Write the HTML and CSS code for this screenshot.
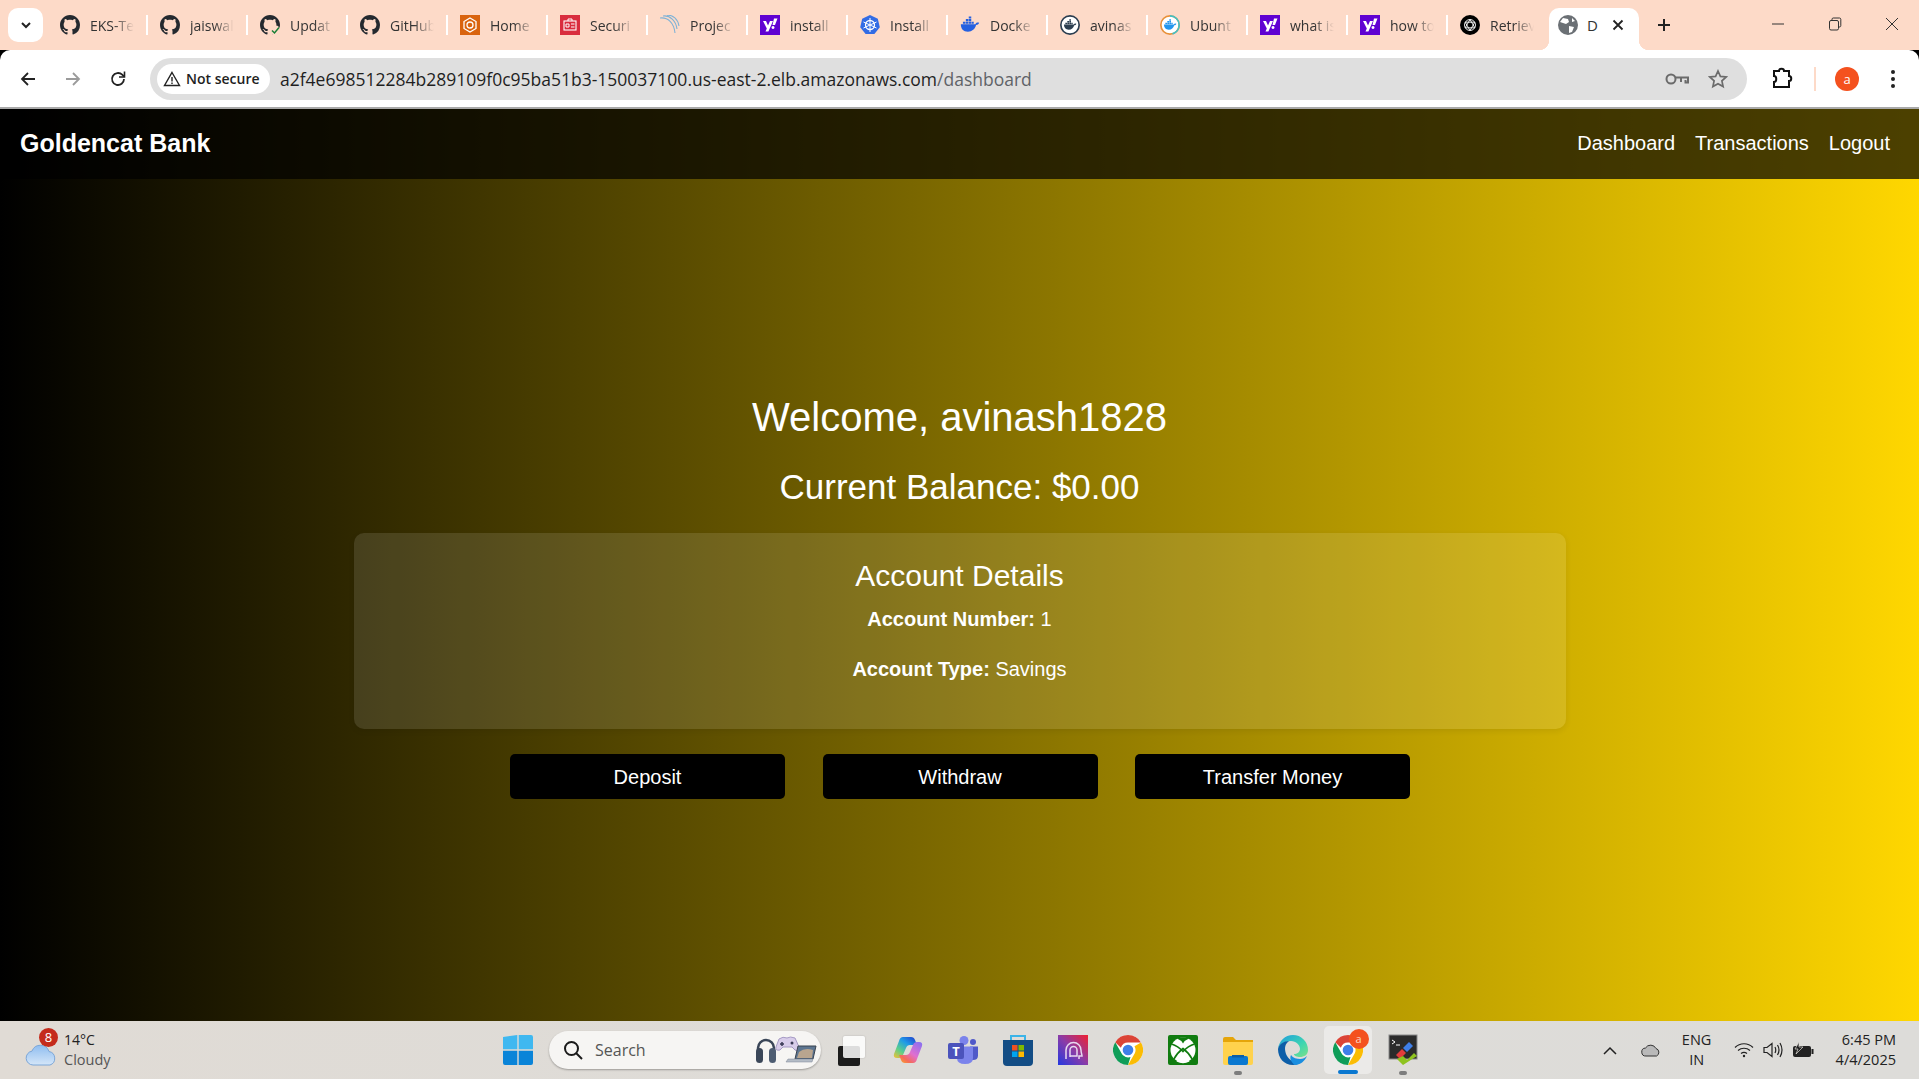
FILE: index.html
```html
<!DOCTYPE html>
<html lang="en">
<head>
  <meta charset="UTF-8" />
  <meta name="viewport" content="width=device-width, initial-scale=1.0" />
  <title>Dashboard - Goldencat Bank</title>
  <link rel="stylesheet" href="styles.css">
</head>
<body>
  <svg class="sprite" aria-hidden="true">
    <symbol id="i-github" viewBox="0 0 16 16">
      <path fill="#24292f" d="M8 0C3.58 0 0 3.58 0 8c0 3.54 2.29 6.53 5.47 7.59.4.07.55-.17.55-.38 0-.19-.01-.82-.01-1.49-2.01.37-2.53-.49-2.69-.94-.09-.23-.48-.94-.82-1.13-.28-.15-.68-.52-.01-.53.63-.01 1.08.58 1.23.82.72 1.21 1.87.87 2.33.66.07-.52.28-.87.51-1.07-1.78-.2-3.64-.89-3.64-3.95 0-.87.31-1.59.82-2.15-.08-.2-.36-1.02.08-2.12 0 0 .67-.21 2.2.82.64-.18 1.32-.27 2-.27.68 0 1.36.09 2 .27 1.53-1.04 2.2-.82 2.2-.82.44 1.1.16 1.92.08 2.12.51.56.82 1.27.82 2.15 0 3.07-1.87 3.75-3.65 3.95.29.25.54.73.54 1.48 0 1.07-.01 1.93-.01 2.2 0 .21.15.46.55.38A8.013 8.013 0 0016 8c0-4.42-3.58-8-8-8z"/>
    </symbol>
    <symbol id="i-yahoo" viewBox="0 0 20 20">
      <rect width="20" height="20" fill="#6001d2"/>
      <path fill="#fff" d="M3 6h3l2 4.600L10 6h3l-4.600 10.500H5.500l1.300-3z"/>
      <path fill="#fff" d="M14 3.500h3.500L15 10h-2.500zM13 11a1.500 1.500 0 1 0 .01 0z"/>
    </symbol>
    <symbol id="i-chrome" viewBox="0 0 48 48">
      <circle cx="24" cy="24" r="24" fill="#fff"/>
      <path fill="#db4437" d="M24 0a24 24 0 0 1 20.800 12H24a12 12 0 0 0-11.400 8.200L3.600 11.500A24 24 0 0 1 24 0z"/>
      <path fill="#fbbc04" d="M44.800 12A24 24 0 0 1 24 48l10.400-18A12 12 0 0 0 34.400 18z"/>
      <path fill="#0f9d58" d="M3.600 11.500l10 17.500A12 12 0 0 0 28 35.300L24 48A24 24 0 0 1 3.600 11.500z"/>
      <circle cx="24" cy="24" r="11" fill="#fff"/>
      <circle cx="24" cy="24" r="8.500" fill="#3f7fe8"/>
    </symbol>
    <symbol id="i-docker" viewBox="0 0 24 24">
      <path d="M1 11h17.500c.6-1.800 2.300-2.300 4.500-1.600-.7 1.900-2 2.700-3.700 2.700C18 17 14.500 20 9.500 20 4 20 1 16.500 1 11z"/>
      <path d="M3.500 8h3v2.500h-3zM7 8h3v2.500H7zM10.500 8h3v2.500h-3zM7 4.800h3v2.700H7zM10.500 4.800h3v2.700h-3zM10.500 1.800h3v2.500h-3zM14 8h2.500v2.500H14z"/>
    </symbol>
  </svg>

  <div class="tabstrip">
    <div class="tab-menu">
      <svg width="14" height="14" viewBox="0 0 14 14"><path d="M3 5l4 4 4-4" fill="none" stroke="#222" stroke-width="2"/></svg>
    </div>
    <div class="tab"><svg class="favicon"><use href="#i-github"/></svg><span class="tab-title">EKS-Te</span></div>
    <div class="tab"><svg class="favicon"><use href="#i-github"/></svg><span class="tab-title">jaiswal</span></div>
    <div class="tab">
      <svg class="favicon" viewBox="0 0 20 20">
        <use href="#i-github" width="20" height="20"/>
        <circle cx="15.500" cy="15.500" r="5" fill="#fddac8"/>
        <path d="M12 15.500l2.500 2.500 4.500-5.500" fill="none" stroke="#1a7f37" stroke-width="1.500"/>
      </svg>
      <span class="tab-title">Updat</span>
    </div>
    <div class="tab"><svg class="favicon"><use href="#i-github"/></svg><span class="tab-title">GitHub</span></div>
    <div class="tab">
      <svg class="favicon" viewBox="0 0 20 20">
        <rect width="20" height="20" fill="#d9640f"/>
        <path d="M10 3l6 3.500v7L10 17l-6-3.500v-7z" fill="none" stroke="#fff" stroke-width="1.300"/>
        <circle cx="10" cy="10" r="3" fill="none" stroke="#fff" stroke-width="1.300"/>
      </svg>
      <span class="tab-title">Home</span>
    </div>
    <div class="tab">
      <svg class="favicon" viewBox="0 0 20 20">
        <rect width="20" height="20" fill="#d92d3e"/>
        <rect x="4" y="6" width="12" height="9" fill="none" stroke="#fff" stroke-width="1.100"/>
        <path d="M6 9h3v3H6zM11 9h3.500M11 12h3.500" fill="none" stroke="#fff"/>
        <path d="M8 6V4h4v2" fill="none" stroke="#fff"/>
      </svg>
      <span class="tab-title">Securi</span>
    </div>
    <div class="tab">
      <svg class="favicon" viewBox="0 0 20 20" fill="none" stroke="#7fb2d6" stroke-width="1.100">
        <path d="M0 3c8-1 14 5 15 15M3 1c7-1 13 5 14 13M7 0c6 0 11 4 12 11"/>
      </svg>
      <span class="tab-title">Projec</span>
    </div>
    <div class="tab"><svg class="favicon"><use href="#i-yahoo"/></svg><span class="tab-title">install</span></div>
    <div class="tab">
      <svg class="favicon" viewBox="0 0 20 20">
        <path d="M10 0l7.800 3.700 2 8.500-5.400 6.800H5.600L.2 12.200l2-8.500z" fill="#326ce5"/>
        <circle cx="10" cy="10" r="4.500" fill="none" stroke="#fff" stroke-width="1.300"/>
        <path d="M10 3v14M3.500 7l13 6M16.500 7l-13 6" stroke="#fff"/>
      </svg>
      <span class="tab-title">Install</span>
    </div>
    <div class="tab"><svg class="favicon docker-blue"><use href="#i-docker"/></svg><span class="tab-title">Docke</span></div>
    <div class="tab">
      <svg class="favicon" viewBox="0 0 24 24">
        <circle cx="12" cy="12" r="11" fill="#fff" stroke="#2c3e50" stroke-width="2"/>
        <g transform="translate(4 4) scale(.68)" fill="#2c3e50"><use href="#i-docker" width="24" height="24"/></g>
      </svg>
      <span class="tab-title">avinas</span>
    </div>
    <div class="tab">
      <svg class="favicon" viewBox="0 0 24 24">
        <circle cx="12" cy="12" r="11" fill="#fff" stroke="#e8913a" stroke-width="2"/>
        <path d="M12 1a11 11 0 0 1 11 11 11 11 0 0 1-8 10.600" fill="none" stroke="#3fc1c9" stroke-width="2"/>
        <g transform="translate(4 4) scale(.68)" fill="#2496ed"><use href="#i-docker" width="24" height="24"/></g>
      </svg>
      <span class="tab-title">Ubunt</span>
    </div>
    <div class="tab"><svg class="favicon"><use href="#i-yahoo"/></svg><span class="tab-title">what is</span></div>
    <div class="tab"><svg class="favicon"><use href="#i-yahoo"/></svg><span class="tab-title">how to</span></div>
    <div class="tab tab-last">
      <svg class="favicon" viewBox="0 0 20 20">
        <circle cx="10" cy="10" r="10" fill="#000"/>
        <g fill="none" stroke="#fff" stroke-width=".9">
          <circle cx="10" cy="10" r="5.500"/>
          <path d="M10 4.500l4.800 8.300H5.200zM5.200 7.200h9.600L10 15.500z"/>
        </g>
      </svg>
      <span class="tab-title">Retriev</span>
    </div>
    <div class="tab-active">
      <svg class="favicon" viewBox="0 0 20 20">
        <circle cx="10" cy="10" r="10" fill="#6b7075"/>
        <path d="M5 3l5 1 1 3-3 2-3-1-3-1zM11 11l5 1-2 5-3 1zM14 3l3 3-3 1z" fill="#fff"/>
      </svg>
      <span class="tab-active-title">D</span>
      <svg class="tab-close" width="12" height="12" viewBox="0 0 12 12"><path d="M1.500 1.500l9 9m0-9l-9 9" stroke="#222" stroke-width="1.800"/></svg>
    </div>
    <svg class="new-tab" width="14" height="14" viewBox="0 0 14 14"><path d="M7 1v12M1 7h12" stroke="#222" stroke-width="2"/></svg>
    <div class="win-controls">
      <svg width="14" height="14" viewBox="0 0 14 14"><path d="M1 7h12" stroke="#333"/></svg>
      <svg width="14" height="14" viewBox="0 0 14 14" fill="none" stroke="#333"><rect x="1.500" y="3.500" width="9" height="9.500" rx="1.500"/><path d="M4 3V2.200C4 1.500 4.500 1 5.200 1h6.300c.8 0 1.300.5 1.300 1.300v6.500c0 .7-.4 1.200-1.800 1.200"/></svg>
      <svg width="14" height="14" viewBox="0 0 14 14"><path d="M1 1l12 12m0-12L1 13" stroke="#333"/></svg>
    </div>
  </div>

  <div class="toolbar">
    <div class="nav-buttons">
      <svg width="18" height="18" viewBox="0 0 18 18" fill="none" stroke="#222" stroke-width="1.800"><path d="M16 9H3M9 3L3 9l6 6"/></svg>
      <svg width="18" height="18" viewBox="0 0 18 18" fill="none" stroke="#9b9b9b" stroke-width="1.800"><path d="M2 9h13M9 3l6 6-6 6"/></svg>
      <svg width="18" height="18" viewBox="0 0 18 18" fill="none" stroke="#222" stroke-width="1.800"><path d="M15 9a6 6 0 1 1-1.800-4.300L15 6.500"/><path d="M15.500 1.500v5.500H10" stroke-width="1.600"/></svg>
    </div>
    <div class="omnibox">
      <div class="not-secure">
        <svg width="18" height="16" viewBox="0 0 18 16" fill="none" stroke="#222" stroke-width="1.400"><path d="M9 1.500l7.500 13h-15z"/><path d="M9 6v4.500M9 11.500v1.500"/></svg>
        <span>Not secure</span>
      </div>
      <div class="url">a2f4e698512284b289109f0c95ba51b3-150037100.us-east-2.elb.amazonaws.com<span class="url-path">/dashboard</span></div>
      <svg class="omni-icon omni-key" width="24" height="16" viewBox="0 0 24 16" fill="none" stroke="#6b6b6b" stroke-width="2"><circle cx="6" cy="8" r="4.500"/><path d="M10.500 6.500H23v5h-2.500V9M16 7v4"/></svg>
      <svg class="omni-icon" width="20" height="20" viewBox="0 0 20 20" fill="none" stroke="#6b6b6b" stroke-width="1.700"><path d="M10 2l2.400 5.400 5.800.6-4.300 3.900 1.200 5.700L10 14.700l-5.100 2.900 1.200-5.700L1.800 8l5.800-.6z"/></svg>
    </div>
    <svg class="ext-icon" width="22" height="24" viewBox="0 0 22 24" fill="none" stroke="#111" stroke-width="2"><path d="M3 4h5c0-3 5-3 5 0h5v5c3 0 3 5 0 5v6H3v-5c3 0 3-6 0-6z"/></svg>
    <div class="toolbar-sep"></div>
    <div class="avatar">a</div>
    <svg class="menu-dots" width="6" height="20" viewBox="0 0 6 20" fill="#222"><circle cx="3" cy="3" r="2"/><circle cx="3" cy="10" r="2"/><circle cx="3" cy="17" r="2"/></svg>
  </div>

  <div class="app">
    <nav class="navbar">
      <a class="brand" href="#">Goldencat Bank</a>
      <div class="nav-links">
        <a href="#">Dashboard</a>
        <a href="#">Transactions</a>
        <a href="#">Logout</a>
      </div>
    </nav>
    <main class="dashboard">
      <h1>Welcome, avinash1828</h1>
      <h2>Current Balance: $0.00</h2>
      <section class="account-details">
        <h3>Account Details</h3>
        <p><strong>Account Number:</strong> 1</p>
        <p><strong>Account Type:</strong> Savings</p>
      </section>
      <div class="actions">
        <a class="btn" href="#">Deposit</a>
        <a class="btn" href="#">Withdraw</a>
        <a class="btn" href="#">Transfer Money</a>
      </div>
    </main>
  </div>

  <footer class="taskbar">
    <div class="weather">
      <div class="weather-icon">
        <svg width="32" height="24" viewBox="0 0 32 24">
          <defs><linearGradient id="cloud1" x1="0" y1="0" x2="0" y2="1"><stop offset="0" stop-color="#8fbdf0"/><stop offset="1" stop-color="#d4e6f8"/></linearGradient></defs>
          <path d="M8 23a7 7 0 0 1-1-13.900A9 9 0 0 1 24 9.500 7 7 0 0 1 25 23z" fill="url(#cloud1)" stroke="#7ba6d8"/>
        </svg>
        <span class="weather-badge">8</span>
      </div>
      <div class="weather-text">
        <span class="temp">14°C</span>
        <span class="sky">Cloudy</span>
      </div>
    </div>

    <div class="task-center">
      <svg class="start" width="30" height="30" viewBox="0 0 30 30">
        <path fill="#3fb8f0" d="M0 2l14.300-2v14.300H0zM15.700 0H28q2 0 2 2v12.300H15.700z"/>
        <path fill="#0a84d8" d="M0 15.700h14.300V30H2q-2 0-2-2zM15.700 15.700H30V28q0 2-2 2H15.700z"/>
      </svg>
      <div class="search">
        <svg width="20" height="20" viewBox="0 0 20 20" fill="none" stroke="#1a1a1a" stroke-width="2"><circle cx="8.500" cy="8.500" r="6.500"/><path d="M13 13l6 6"/></svg>
        <span class="search-text">Search</span>
        <svg class="search-art" width="62" height="32" viewBox="0 0 62 32">
          <path d="M3 20v-6a8 8 0 0 1 16 0v6" fill="none" stroke="#3a4658" stroke-width="2.500"/>
          <rect x="1" y="14" width="7" height="15" rx="3.500" fill="#3a4658"/>
          <rect x="14" y="14" width="7" height="15" rx="3.500" fill="#4e5d72"/>
          <path d="M24 5q4-3 8-1 3-2 8 0l4 9q0 5-4 3l-3-3H28l-3 3q-5 1-4-3z" fill="#d8cdea" stroke="#a69bc4"/>
          <path d="M27 8v4M25 10h4" stroke="#3a3a55" stroke-width="1.500"/>
          <circle cx="37" cy="9" r="1.500" fill="#3a3a55"/>
          <path d="M43 12h18l-3 13H40z" fill="#5d7590" stroke="#39424f"/>
          <path d="M44 18q6-5 14-2l-1 8H42z" fill="#b9a58f"/>
          <path d="M33 25h25l-1 3H31z" fill="#b4bcc6" stroke="#7c8794" stroke-width=".5"/>
        </svg>
      </div>
      <div class="task-icon task-view">
        <span class="tv-back"></span>
        <span class="tv-front"></span>
      </div>
      <div class="task-icon">
        <svg width="30" height="30" viewBox="0 0 30 30">
          <defs>
            <linearGradient id="cp1" x1="0" y1="1" x2=".8" y2="0"><stop offset="0" stop-color="#f8c030"/><stop offset=".35" stop-color="#5ccf8a"/><stop offset=".7" stop-color="#1f9ae8"/><stop offset="1" stop-color="#2050d0"/></linearGradient>
            <linearGradient id="cp2" x1=".9" y1="0" x2=".1" y2="1"><stop offset="0" stop-color="#8a70f0"/><stop offset=".5" stop-color="#e070d0"/><stop offset=".8" stop-color="#f56a5a"/><stop offset="1" stop-color="#f8a030"/></linearGradient>
          </defs>
          <path fill="url(#cp1)" d="M10 2h8q3 0 4 3l2 5h-7q-3 0-4 3l-3 7q-1 3-4 3H4q-4 0-3-4L6 6q1-4 4-4z"/>
          <path fill="url(#cp2)" d="M20 28h-8q-3 0-4-3l-2-5h7q3 0 4-3l3-7q1-3 4-3h2q4 0 3 4l-5 13q-1 4-4 4z"/>
        </svg>
      </div>
      <div class="task-icon">
        <svg width="30" height="30" viewBox="0 0 30 30">
          <circle cx="16" cy="5.500" r="4.500" fill="#7b83eb"/>
          <circle cx="25" cy="7" r="3" fill="#5059c9"/>
          <path d="M22 11.500h8v9q0 4.500-5 4.500h-3z" fill="#5059c9"/>
          <path d="M9 11.500h16V23q0 6-8 6t-8-6z" fill="#7b83eb"/>
          <rect x="0" y="8" width="16" height="16" rx="2" fill="#4b53bc"/>
          <text class="teams-t" x="8" y="21" text-anchor="middle">T</text>
        </svg>
      </div>
      <div class="task-icon">
        <svg width="30" height="32" viewBox="0 0 30 32">
          <path d="M8 6V2h14v4" fill="none" stroke="#3bb4e8" stroke-width="2"/>
          <path d="M0 6h30v22q0 4-4 4H4q-4 0-4-4z" fill="#134d85"/>
          <rect x="9" y="11" width="5.500" height="5.500" fill="#f25022"/>
          <rect x="15.500" y="11" width="5.500" height="5.500" fill="#7fba00"/>
          <rect x="9" y="17.500" width="5.500" height="5.500" fill="#00a4ef"/>
          <rect x="15.500" y="17.500" width="5.500" height="5.500" fill="#ffb900"/>
        </svg>
      </div>
      <div class="task-icon">
        <svg width="30" height="30" viewBox="0 0 30 30">
          <defs><linearGradient id="app1" x1="0" y1="1" x2="1" y2="0"><stop offset="0" stop-color="#2438e0"/><stop offset=".5" stop-color="#8a3ca8"/><stop offset="1" stop-color="#f02030"/></linearGradient></defs>
          <rect width="30" height="30" fill="url(#app1)"/>
          <path d="M8 24v-9a7.500 7.500 0 0 1 15 0c0 3 1 4 1 6h-3v3" fill="none" stroke="#e8d8f0" stroke-width="1.500"/>
          <path d="M12 22v-7a3.500 3.500 0 0 1 7 0v6h-7" fill="none" stroke="#e8d8f0" stroke-width="1.500"/>
        </svg>
      </div>
      <div class="task-icon"><svg width="30" height="30"><use href="#i-chrome"/></svg></div>
      <div class="task-icon">
        <svg width="30" height="30" viewBox="0 0 30 30">
          <rect width="30" height="30" rx="2" fill="#107c10"/>
          <circle cx="15" cy="15" r="12.500" fill="#fff"/>
          <path d="M3.500 9Q10 11 15 16.500 20 11 26.500 9" fill="none" stroke="#107c10" stroke-width="1.600"/>
          <path d="M6 24Q9 18 15 13.500 21 18 24 24" fill="none" stroke="#107c10" stroke-width="1.600"/>
          <path d="M9 3.500Q13 5 15 8.500 17 5 21 3.500 15 1 9 3.500z" fill="#107c10"/>
          <path d="M15 20q-5 4-6.500 6.500Q15 30 21.500 26.500 20 24 15 20z" fill="#fff"/>
        </svg>
      </div>
      <div class="task-icon task-running">
        <svg width="30" height="30" viewBox="0 0 30 30">
          <path d="M0 4q0-2 2-2h8l3 3h17v6H0z" fill="#e5a50a"/>
          <path d="M0 7h30v21q0 2-2 2H2q-2 0-2-2z" fill="#ffd24d"/>
          <rect x="5" y="21" width="20" height="9" rx="2" fill="#0a78d0"/>
          <rect x="9" y="20" width="12" height="2.500" fill="#0a5ea8"/>
        </svg>
      </div>
      <div class="task-icon">
        <svg width="30" height="30" viewBox="0 0 30 30">
          <defs><linearGradient id="edge1" x1="0" y1="0" x2="1" y2="1"><stop offset="0" stop-color="#1f9be0"/><stop offset=".6" stop-color="#3dd6b0"/><stop offset="1" stop-color="#7be08a"/></linearGradient></defs>
          <path d="M15 0a15 15 0 0 1 15 15c0 5-4 7-8 7-3 0-6-1-6-3 3 0 6-2 6-5 0-4-4-8-9-8C6 6 1 10 0 14 1 6 7 0 15 0z" fill="url(#edge1)"/>
          <path d="M0 14c1-5 6-8 11-8-4 3-5 7-3 13 2 5 7 9 14 9-2 1-4 2-7 2C6 30 0 23 0 14z" fill="#0c5ea8"/>
          <path d="M13 20c2 3 6 4 9 4 3 0 5-1 7-3-2 5-7 9-12 9-3-2-6-6-4-10z" fill="#1a8ee0"/>
        </svg>
      </div>
      <div class="task-icon task-active">
        <svg width="30" height="30"><use href="#i-chrome"/></svg>
        <span class="task-badge">a</span>
      </div>
      <div class="task-icon task-running">
        <svg width="30" height="32" viewBox="0 0 30 32">
          <rect x="1" y="1" width="28" height="24" fill="#2b2b2b" stroke="#8a8a8a"/>
          <path d="M4 6l3 2-3 2M8 11h4" fill="none" stroke="#fff"/>
          <path d="M8 21l6-6 4 4-6 6z" fill="#e23c3c"/>
          <path d="M15 14l6-6 4 4-6 6z" fill="#3f7fe8"/>
          <path d="M15 31l-6-6 6-3 4 4 7-7 3 3z" fill="#8fc31f"/>
        </svg>
      </div>
    </div>

    <div class="tray">
      <svg width="14" height="9" viewBox="0 0 14 9" fill="none" stroke="#222" stroke-width="1.500"><path d="M1 8l6-6 6 6"/></svg>
      <svg class="tray-cloud" width="20" height="14" viewBox="0 0 20 14"><path d="M5 13a4 4 0 0 1-.5-8A6 6 0 0 1 15 5.500 4 4 0 0 1 15.500 13z" fill="#b9b9b9" stroke="#333"/></svg>
      <div class="lang"><span>ENG</span><span>IN</span></div>
      <svg class="tray-wifi" width="20" height="16" viewBox="0 0 20 16" fill="none" stroke="#222" stroke-width="1.200"><path d="M1 5.500c5-5 13-5 18 0M4 8.500c3.500-3 8.500-3 12 0M7 11.500c2-1.500 4-1.500 6 0"/><circle cx="10" cy="14" r="1.200" fill="#222" stroke="none"/></svg>
      <svg class="tray-sound" width="20" height="16" viewBox="0 0 20 16" fill="none" stroke="#222" stroke-width="1.200"><path d="M1 5.500h3L9 1.500v13L4 10.500H1zM12 5q1.500 3 0 6M14.500 3q3 5 0 10M17 1q4 7 0 14"/></svg>
      <svg width="22" height="16" viewBox="0 0 22 16"><rect x="1" y="4" width="18" height="11" rx="2" fill="#222"/><rect x="19.500" y="7" width="2" height="5" fill="#222"/><path d="M7 0L3 7h3l-2 5 7-7H7z" fill="#222" stroke="#dedbd6" stroke-width=".7"/></svg>
      <div class="clock"><span>6:45 PM</span><span>4/4/2025</span></div>
    </div>
  </footer>
</body>
</html>
```

FILE: styles.css
```css
* {
  box-sizing: border-box;
}
html, body {
  height: 100%;
}
body {
  margin: 0;
  display: flex;
  flex-direction: column;
  overflow: hidden;
  font-family: "Liberation Sans", Arial, sans-serif;
  background: #000;
}
a {
  text-decoration: none;
  color: inherit;
}
.sprite {
  display: none;
}

/* browser tabs */
.tabstrip {
  height: 50px;
  flex: none;
  display: flex;
  align-items: flex-start;
  background: #fddac8;
  padding-left: 8px;
  font-family: "Open Sans", sans-serif;
}
.tab-menu {
  width: 35px;
  height: 34px;
  margin-top: 8px;
  margin-right: 5px;
  border-radius: 10px;
  background: #fff;
  display: flex;
  align-items: center;
  justify-content: center;
}
.tab {
  width: 100px;
  height: 20px;
  margin-top: 15px;
  padding-left: 12px;
  display: flex;
  align-items: center;
  gap: 10px;
  border-right: 2px solid #fff;
}
.tab-last {
  border-right: none;
}
.favicon {
  width: 20px;
  height: 20px;
  flex: none;
}
.docker-blue {
  fill: #2560e0;
}
.tab-title {
  white-space: nowrap;
  font-size: 14px;
  color: #333;
  -webkit-mask-image: linear-gradient(to right, #000 24px, transparent 44px);
  mask-image: linear-gradient(to right, #000 24px, transparent 44px);
}
.tab-active {
  position: relative;
  width: 90px;
  height: 42px;
  margin-top: 8px;
  margin-left: 1px;
  padding: 0 0 8px 9px;
  background: #fff;
  border-radius: 10px 10px 0 0;
  display: flex;
  align-items: center;
  gap: 9px;
}
.tab-active::before,
.tab-active::after {
  content: "";
  position: absolute;
  bottom: 0;
  width: 10px;
  height: 10px;
}
.tab-active::before {
  left: -10px;
  background: radial-gradient(circle at 0 0, transparent 10px, #fff 10.500px);
}
.tab-active::after {
  right: -10px;
  background: radial-gradient(circle at 100% 0, transparent 10px, #fff 10.500px);
}
.tab-active-title {
  width: 14px;
  font-size: 15px;
  color: #333;
}
.tab-close {
  margin-left: 2px;
}
.new-tab {
  margin: 18px 0 0 18px;
}
.win-controls {
  margin-left: auto;
  margin-top: 17px;
  padding-right: 20px;
  display: flex;
  gap: 43px;
}

/* address bar */
.toolbar {
  height: 59px;
  flex: none;
  display: flex;
  align-items: center;
  padding-left: 19px;
  background: #fff;
  border-bottom: 2px solid #a9a9a9;
  border-radius: 10px 10px 0 0;
  font-family: "Open Sans", sans-serif;
}
.nav-buttons {
  display: flex;
  gap: 27px;
  margin-right: 23px;
}
.omnibox {
  width: 1597px;
  height: 42px;
  display: flex;
  align-items: center;
  padding: 0 19px 0 7px;
  border-radius: 21px;
  background: #dfdfdf;
}
.not-secure {
  width: 113px;
  height: 30px;
  flex: none;
  display: flex;
  align-items: center;
  padding-left: 6px;
  gap: 5px;
  border-radius: 15px;
  background: #fff;
  font-size: 14px;
  font-weight: 600;
  color: #1f1f1f;
}
.url {
  margin-left: 10px;
  flex: 1;
  font-size: 17.500px;
  color: #1f1f1f;
  white-space: nowrap;
}
.url-path {
  color: #5f6368;
}
.omni-icon {
  margin-left: 16px;
}
.omni-key {
  margin-right: 3px;
}
.ext-icon {
  margin-left: 24px;
}
.toolbar-sep {
  width: 2px;
  height: 24px;
  margin-left: 21px;
  background: #fddac8;
}
.avatar {
  width: 24px;
  height: 24px;
  margin-left: 19px;
  border-radius: 50%;
  background: #f4511e;
  color: #fff;
  font-size: 13px;
  display: flex;
  align-items: center;
  justify-content: center;
}
.menu-dots {
  margin-left: 31px;
}

/* bank page */
.app {
  flex: 1;
  min-height: 0;
  display: flex;
  flex-direction: column;
  color: #fff;
  background: linear-gradient(to right, #000, #ffd700);
}
.navbar {
  height: 70px;
  flex: none;
  display: flex;
  align-items: center;
  justify-content: space-between;
  padding: 0 29px 2px 20px;
  background: rgba(0, 0, 0, 0.7);
}
.brand {
  font-size: 25px;
  font-weight: bold;
}
.nav-links {
  display: flex;
  gap: 20px;
  font-size: 20px;
}
.dashboard {
  flex: 1;
  display: flex;
  flex-direction: column;
  align-items: center;
  justify-content: center;
  padding-bottom: 6px;
}
.dashboard h1 {
  margin: 0 0 27px;
  font-size: 40px;
  font-weight: normal;
}
.dashboard h2 {
  margin: 0 0 26px;
  font-size: 35px;
  font-weight: normal;
}
.account-details {
  width: 1212px;
  height: 196px;
  padding: 26px 20px;
  text-align: center;
  border-radius: 10px;
  background: rgba(255, 255, 255, 0.115);
  box-shadow: 0 2px 6px rgba(0, 0, 0, 0.08);
}
.account-details h3 {
  margin: 0 0 15px;
  font-size: 30px;
  font-weight: normal;
}
.account-details p {
  margin: 0 0 27px;
  font-size: 20px;
}
.actions {
  margin-top: 25px;
  padding-left: 1px;
  display: flex;
  gap: 37.500px;
}
.btn {
  width: 275px;
  height: 45px;
  padding-top: 1px;
  display: flex;
  align-items: center;
  justify-content: center;
  border-radius: 5px;
  background: #000;
  font-size: 20px;
}

/* windows taskbar */
.taskbar {
  height: 58px;
  flex: none;
  position: relative;
  display: flex;
  align-items: center;
  background: linear-gradient(to right, #e0dbd5, #dedcd8 50%, #dddcd9);
  font-family: "Open Sans", sans-serif;
  color: #222;
}
.weather {
  width: 503px;
  padding-left: 25px;
  display: flex;
  align-items: center;
  gap: 7px;
}
.weather-icon {
  position: relative;
  width: 32px;
  height: 24px;
  margin-top: 8px;
}
.weather-badge {
  position: absolute;
  top: -14px;
  left: 14px;
  width: 19px;
  height: 19px;
  border-radius: 50%;
  background: #c42b1c;
  color: #fff;
  font-size: 13px;
  line-height: 19px;
  text-align: center;
}
.weather-text {
  display: flex;
  flex-direction: column;
  font-size: 14px;
  line-height: 20px;
}
.sky {
  color: #555;
  font-size: 14.500px;
}
.task-center {
  display: flex;
  align-items: center;
}
.start {
  margin-right: 16px;
}
.search {
  width: 272px;
  height: 38px;
  margin-right: 7px;
  padding: 0 4px 0 14px;
  display: flex;
  align-items: center;
  gap: 12px;
  border-radius: 19px;
  background: #f6f5f3;
  box-shadow: 0 1px 2px rgba(0, 0, 0, 0.3);
}
.search-text {
  flex: 1;
  font-size: 16px;
  color: #555;
}
.task-icon {
  position: relative;
  width: 55px;
  height: 48px;
  display: flex;
  align-items: center;
  justify-content: center;
}
.task-view {
  width: 52px;
}
.tv-back {
  position: absolute;
  left: 10px;
  top: 20px;
  width: 22px;
  height: 20px;
  border-radius: 2px;
  background: #1c1c1c;
}
.tv-front {
  position: absolute;
  left: 15px;
  top: 10px;
  width: 22px;
  height: 22px;
  border-radius: 2px;
  background: rgba(255, 255, 255, 0.85);
  box-shadow: 0 0 2px rgba(0, 0, 0, 0.2);
}
.teams-t {
  fill: #fff;
  font-size: 13px;
  font-weight: bold;
}
.task-running::after {
  content: "";
  position: absolute;
  bottom: -1px;
  left: 24px;
  width: 8px;
  height: 4px;
  border-radius: 2px;
  background: #7d7d7d;
}
.task-active {
  width: 48px;
  margin: 0 3.500px;
  border-radius: 5px;
  background: #ebeae8;
}
.task-active::after {
  content: "";
  position: absolute;
  bottom: 0;
  left: 14px;
  width: 20px;
  height: 4px;
  border-radius: 2px;
  background: #0a78d0;
}
.task-badge {
  position: absolute;
  top: 3px;
  right: 3px;
  width: 20px;
  height: 20px;
  border-radius: 50%;
  background: #f4511e;
  color: #fbd5c5;
  font-size: 11px;
  text-align: center;
  line-height: 19px;
}
.tray {
  position: absolute;
  right: 23px;
  top: 0;
  height: 100%;
  display: flex;
  align-items: center;
  font-size: 14.500px;
}
.tray-cloud {
  margin-left: 24px;
}
.lang {
  width: 34px;
  margin: 0 20px 0 19px;
  display: flex;
  flex-direction: column;
  align-items: center;
  line-height: 20px;
}
.tray-wifi {
  margin-right: 9px;
}
.tray-sound {
  margin-right: 9px;
}
.clock {
  margin-left: 22px;
  display: flex;
  flex-direction: column;
  align-items: flex-end;
  line-height: 20px;
}
```
